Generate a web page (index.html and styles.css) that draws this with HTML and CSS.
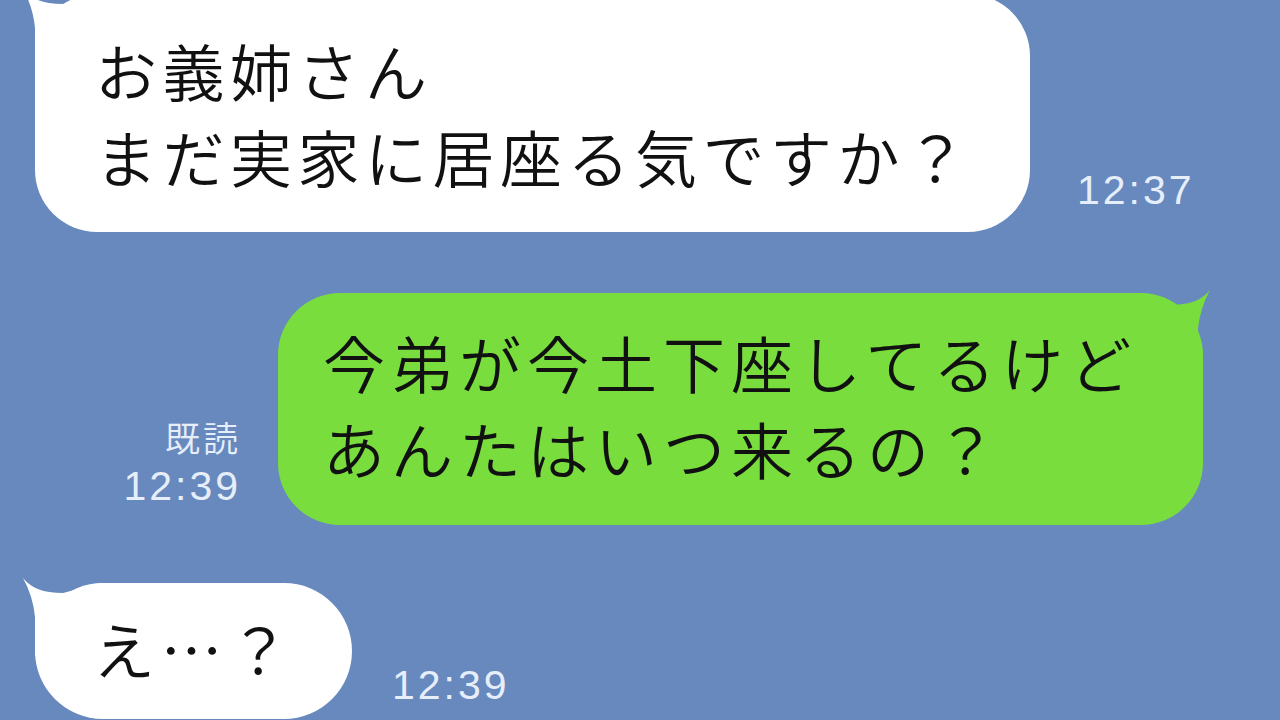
FILE: index.html
```html
<!DOCTYPE html>
<html lang="ja">
<head>
    <meta charset="UTF-8">
    <meta name="viewport" content="width=device-width, initial-scale=1.0">
    <title>トーク</title>
    <link rel="stylesheet" href="styles.css">
</head>
<body>

    <div class="chat">

        <!-- incoming message -->
        <div class="row row-first">
            <div class="bubble bubble-white bubble-long">
                <svg class="tail tail-left" viewBox="0 0 80 80" width="80" height="80">
                    <path d="M2,2 Q12,20 14,41 L14,80 L80,80 L80,7 L42,17 C22,17 10,12 2,2 Z"></path>
                </svg>
                <p class="msg">お義姉さん<br>まだ実家に居座る気ですか？</p>
            </div>
            <div class="meta meta-first">
                <span class="time">12:37</span>
            </div>
        </div>

        <!-- my message -->
        <div class="row row-mine">
            <div class="meta meta-mine">
                <span class="read">既読</span>
                <span class="time">12:39</span>
            </div>
            <div class="bubble bubble-green">
                <svg class="tail tail-right" viewBox="0 0 80 80" width="80" height="80">
                    <path d="M2,2 Q12,20 14,41 L14,80 L80,80 L80,7 L42,17 C22,17 10,12 2,2 Z"></path>
                </svg>
                <p class="msg">今弟が今土下座してるけど<br>あんたはいつ来るの？</p>
            </div>
        </div>

        <!-- incoming reply -->
        <div class="row row-last">
            <div class="bubble bubble-white bubble-short">
                <svg class="tail tail-left" viewBox="0 0 80 80" width="80" height="80">
                    <path d="M2,2 Q12,20 14,41 L14,80 L80,80 L80,7 L42,17 C22,17 10,12 2,2 Z"></path>
                </svg>
                <p class="msg">え…？</p>
            </div>
            <div class="meta meta-last">
                <span class="time">12:39</span>
            </div>
        </div>

    </div>

</body>
</html>
```

FILE: styles.css
```css
body {
    margin: 0;
    padding: 0;
    width: 1280px;
    height: 720px;
    overflow: hidden;
    background-color: #6889be;
    font-family: "Noto Sans CJK JP", "Noto Sans", sans-serif;
    color: #111;
}

.chat {
    display: flex;
    flex-direction: column;
}

.row {
    display: flex;
    align-items: flex-end;
}

.row-first {
    margin-top: -6px;
    padding-left: 35px;
    gap: 47px;
}

.row-mine {
    margin-top: 61px;
    gap: 40px;
}

.row-last {
    margin-top: 58px;
    padding-left: 35px;
    gap: 40px;
}

/* bubbles */
.bubble {
    position: relative;
    border-radius: 62px;
    box-sizing: border-box;
}

.bubble-white {
    background-color: #fff;
}

.bubble-white .tail path {
    fill: #fff;
}

.bubble-green {
    width: 925px;
    height: 232px;
    padding: 26px 0 34px 45px;
    background-color: #79de3d;
}

.bubble-green .tail path {
    fill: #79de3d;
}

.bubble-green .msg {
    letter-spacing: 6px;
}

.bubble-long {
    width: 995px;
    height: 238px;
    padding: 33px 0 33px 60px;
}

.bubble-short {
    width: 317px;
    height: 136px;
    padding: 22px 0 28px 58px;
    border-radius: 68px;
}

.tail {
    position: absolute;
    top: -7px;
}

.tail-left {
    left: -14px;
}

.tail-right {
    right: -9px;
    top: -5px;
    transform: scaleX(-1);
}

.msg {
    position: relative;
    margin: 0;
    font-size: 62px;
    font-weight: 350;
    line-height: 86px;
    letter-spacing: 5.5px;
    white-space: nowrap;
}

/* time and read marks */
.meta {
    display: flex;
    flex-direction: column;
    align-items: flex-end;
    color: #e6eefa;
}

.meta-first {
    margin-bottom: 19px;
}

.meta-mine {
    width: 238px;
    margin-bottom: 16px;
}

.meta-last {
    margin-bottom: 11px;
}

.time {
    font-family: "Liberation Sans", Arial, sans-serif;
    font-size: 41px;
    line-height: 46px;
    letter-spacing: 3px;
    margin-right: -3px;
}

.read {
    font-size: 35px;
    font-weight: 350;
    line-height: 52px;
    letter-spacing: 3px;
    margin-right: -3px;
}
```
